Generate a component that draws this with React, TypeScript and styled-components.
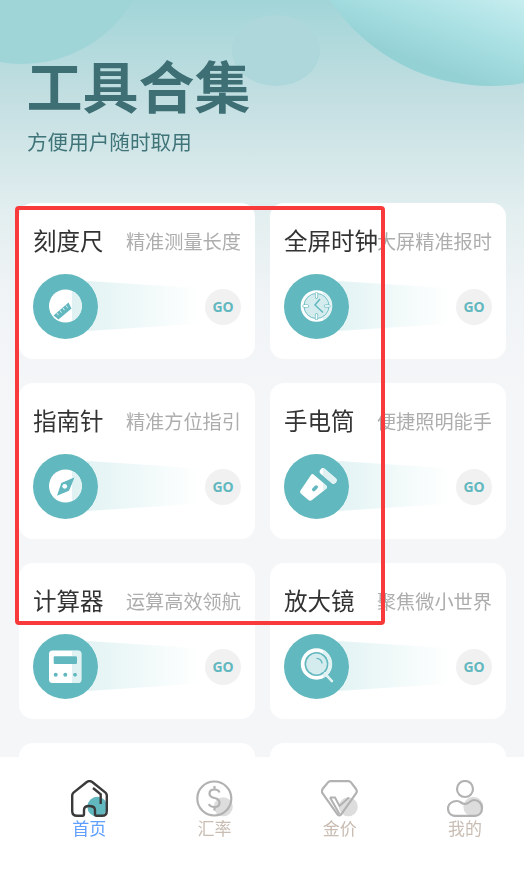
import React from 'react';
import styled, { createGlobalStyle } from 'styled-components';

const TEAL = '#62b8bf';
const CJK = '"Noto Sans CJK SC", "Noto Sans", sans-serif';

const GlobalStyle = createGlobalStyle`
  html, body {
    margin: 0;
    padding: 0;
    background: #fff;
    font-family: ${CJK};
  }
`;

type ToolType = {
  title: string;
  desc: string;
  icon: React.ReactNode;
};

const RulerIcon = () => (
  <svg width="65" height="65" viewBox="0 0 65 65">
    <circle cx="32.5" cy="32" r="16.5" fill="#fff" />
    <path d="M20.5 41.5 L35.5 28.5 L38.5 34.5 L25.5 45.5 Z" fill={TEAL} />
    <path d="M24 39 l1.4 2.2 M27 36.5 l1.4 2.2 M30 34 l1.4 2.2 M33 31.5 l1.4 2.2" stroke="#dff1f2" strokeWidth="1" />
  </svg>
);

const ClockIcon = () => (
  <svg width="65" height="65" viewBox="0 0 65 65">
    <circle cx="32.5" cy="32" r="14.4" fill="#d5ecee" stroke="#fff" strokeWidth="2.8" />
    <circle cx="32.5" cy="32" r="12.5" fill="none" stroke={TEAL} strokeWidth="0.8" />
    <path d="M32.5 19.5 v3.6 M32.5 40.9 v3.6 M20 32 h3.6 M41.4 32 h3.6" stroke={TEAL} strokeWidth="3.2" strokeLinecap="round" />
    <path d="M32.5 19.5 v3.6 M32.5 40.9 v3.6 M20 32 h3.6 M41.4 32 h3.6" stroke="#fff" strokeWidth="1.8" strokeLinecap="round" />
    <path d="M36 25 L31 31 L39 38.5" fill="none" stroke={TEAL} strokeWidth="1.5" />
  </svg>
);

const CompassIcon = () => (
  <svg width="65" height="65" viewBox="0 0 65 65">
    <circle cx="32.5" cy="32" r="16.5" fill="#fff" />
    <path d="M41.7 23.3 L36 36.7 L24 41.7 L28.3 29 Z" fill={TEAL} />
    <circle cx="31.7" cy="32.3" r="2.4" fill="#fff" />
  </svg>
);

const FlashlightIcon = () => (
  <svg width="65" height="65" viewBox="0 0 65 65">
    <path
      d="M16.5 36.5 L27 21 Q28 19.6 29.6 20.4 L42.4 31.6 Q43.6 33 42.6 34.4 L28 46 Q26 47.4 24.4 46 L16.8 39.6 Q15.4 38 16.5 36.5 Z"
      fill="#fff"
    />
    <path d="M39 17.5 L49.5 26.5" stroke="#fff" strokeWidth="6.5" strokeLinecap="round" />
    <rect x="27.5" y="32.5" width="7" height="3.6" rx="1.8" transform="rotate(-45 31 34.3)" fill={TEAL} />
  </svg>
);

const CalculatorIcon = () => (
  <svg width="65" height="65" viewBox="0 0 65 65">
    <rect x="16" y="16.5" width="32.5" height="32.5" rx="3.5" fill="#fff" />
    <rect x="20.7" y="22.3" width="23.3" height="7.8" rx="1" fill={TEAL} />
    <circle cx="22.7" cy="40.7" r="2" fill={TEAL} />
    <circle cx="32.3" cy="40.7" r="2" fill={TEAL} />
    <circle cx="42" cy="40.7" r="2" fill={TEAL} />
  </svg>
);

const MagnifierIcon = () => (
  <svg width="65" height="65" viewBox="0 0 65 65">
    <circle cx="32.5" cy="30" r="14.2" fill="#fff" stroke="#fff" strokeWidth="3" />
    <circle cx="32.5" cy="30" r="12" fill={TEAL} />
    <circle cx="32.5" cy="30" r="10.4" fill="#d5ecee" />
    <path d="M32.5 24.4 a6 6 0 0 1 5.6 5" fill="none" stroke={TEAL} strokeWidth="1.4" />
    <path d="M41 39.5 L47.8 47" stroke="#fff" strokeWidth="2.6" strokeLinecap="round" />
  </svg>
);

const HomeIcon = () => (
  <svg width="37" height="37" viewBox="0 0 37 37">
    <circle cx="26.3" cy="26.7" r="10" fill={TEAL} />
    <path
      d="M15.8 2 L2.5 12.6 Q1.2 13.8 1.2 15.5 V31 Q1.2 35.8 6 35.8 H11.5 Q13 35.8 13 34 V30 Q13 26 18 26 Q24 26 24 30 V34 Q24 35.8 25.6 35.8 H31 Q35.8 35.8 35.8 31 V15.5 Q35.8 13.8 34.5 12.6 L21.2 2 Q18.5 0 15.8 2 Z"
      fill="none"
      stroke="#3a3a3a"
      strokeWidth="2.4"
      strokeLinejoin="round"
    />
    <path d="M22 8 L29.7 14.3 V24" fill="none" stroke="#3a3a3a" strokeWidth="2.4" />
  </svg>
);

const DollarIcon = () => (
  <svg width="37" height="37" viewBox="0 0 37 37">
    <circle cx="27.3" cy="26.7" r="9.5" fill="#ddd" />
    <circle cx="18.3" cy="18.5" r="17" fill="none" stroke="#b2b2b2" strokeWidth="2.2" />
    <path
      d="M23.5 12.5 Q22.5 9.5 18.5 9.5 Q13.5 9.5 13.5 13.5 Q13.5 17 18.5 18 Q23.5 19 23.5 23 Q23.5 27 18.5 27 Q14 27 13 24 M18.5 6 V9.5 M18.5 27 V30.5"
      fill="none"
      stroke="#b2b2b2"
      strokeWidth="2.2"
    />
  </svg>
);

const DiamondIcon = () => (
  <svg width="37" height="37" viewBox="0 0 37 37">
    <circle cx="27.3" cy="26.7" r="9.5" fill="#ddd" />
    <path
      d="M9.5 1.2 H27.5 Q29 1.2 30 2.4 L35 9 Q36.6 11.4 35 13.4 L20 34.6 Q18.3 36.4 16.6 34.6 L1.6 13.4 Q0.2 11.4 1.6 9 L7 2.4 Q8 1.2 9.5 1.2 Z"
      fill="none"
      stroke="#b2b2b2"
      strokeWidth="2.2"
    />
    <path d="M9 17.5 H14 L18.5 26 L28 17.5 M9 17.5 L18.5 34" fill="none" stroke="#b2b2b2" strokeWidth="2" />
  </svg>
);

const UserIcon = () => (
  <svg width="37" height="37" viewBox="0 0 37 37">
    <circle cx="26.3" cy="26.7" r="10" fill="#ddd" />
    <circle cx="18" cy="9" r="8" fill="none" stroke="#b2b2b2" strokeWidth="2.2" />
    <path
      d="M10 21 C14 21 14 24 18 24 C22 24 23 20 27 20 C32 20 35 24 35 28 C35 33 32 35.8 28 35.8 H8 C3 35.8 1 32 1 28 C1 24 5 21 10 21 Z"
      fill="none"
      stroke="#b2b2b2"
      strokeWidth="2.2"
    />
  </svg>
);

const tools: ToolType[] = [
  { title: '刻度尺', desc: '精准测量长度', icon: <RulerIcon /> },
  { title: '全屏时钟', desc: '大屏精准报时', icon: <ClockIcon /> },
  { title: '指南针', desc: '精准方位指引', icon: <CompassIcon /> },
  { title: '手电筒', desc: '便捷照明能手', icon: <FlashlightIcon /> },
  { title: '计算器', desc: '运算高效领航', icon: <CalculatorIcon /> },
  { title: '放大镜', desc: '聚焦微小世界', icon: <MagnifierIcon /> },
  { title: '', desc: '', icon: null },
  { title: '', desc: '', icon: null },
];

const tabs = [
  { label: '首页', icon: <HomeIcon />, active: true },
  { label: '汇率', icon: <DollarIcon />, active: false },
  { label: '金价', icon: <DiamondIcon />, active: false },
  { label: '我的', icon: <UserIcon />, active: false },
];

const App: React.FC = () => {
  return (
    <>
      <GlobalStyle />
      <StyledPage>
        <BlobLeft />
        <BlobSmall />
        <BlobRight />
        <Content>
          <Header>
            <Title>工具合集</Title>
            <Subtitle>方便用户随时取用</Subtitle>
          </Header>
          <ToolGrid>
            {tools.map((tool, index) => (
              <ToolCard key={index}>
                {tool.icon && (
                  <>
                    <CardHead>
                      <CardTitle>{tool.title}</CardTitle>
                      <CardDesc>{tool.desc}</CardDesc>
                    </CardHead>
                    <CardBody>
                      <IconDisc>{tool.icon}</IconDisc>
                      <Ray />
                      <GoButton>GO</GoButton>
                    </CardBody>
                  </>
                )}
              </ToolCard>
            ))}
          </ToolGrid>
        </Content>
        <TabBar>
          {tabs.map((tab) => (
            <Tab key={tab.label}>
              <TabIcon>{tab.icon}</TabIcon>
              <TabLabel $active={tab.active}>{tab.label}</TabLabel>
            </Tab>
          ))}
        </TabBar>
        <Annotation />
      </StyledPage>
    </>
  );
};

const StyledPage = styled.div`
  position: relative;
  display: flex;
  flex-direction: column;
  width: 524px;
  height: 895px;
  overflow: hidden;
  background: linear-gradient(180deg, #a2d5d8 0%, #c4dfe2 100px, #e2eeef 210px, #f1f4f6 300px, #f4f6f8 400px);
`;

const BlobLeft = styled.div`
  position: absolute;
  left: -107px;
  top: -194px;
  width: 258px;
  height: 258px;
  border-radius: 50%;
  background: #9fd5d7;
`;

const BlobSmall = styled.div`
  position: absolute;
  left: 232px;
  top: 15px;
  width: 88px;
  height: 71px;
  border-radius: 50%;
  background: #add7db;
`;

const BlobRight = styled.div`
  position: absolute;
  left: 298px;
  top: -298px;
  width: 384px;
  height: 384px;
  border-radius: 50%;
  background: linear-gradient(200deg, #c6edef 68%, #a9e0e3 78%, #94d1d5 87%);
`;

const Content = styled.div`
  position: relative;
  flex: 1;
  min-height: 0;
  overflow: hidden;
`;

const Header = styled.div`
  height: 203px;
  box-sizing: border-box;
  padding: 44px 0 0 26.5px;
`;

const Title = styled.div`
  font-size: 56px;
  line-height: 80px;
  font-weight: 700;
  color: #3d6f74;
`;

const Subtitle = styled.div`
  margin: 2px 0 0 0.5px;
  font-size: 20.6px;
  line-height: 30px;
  color: #3f7478;
`;

const ToolGrid = styled.div`
  display: grid;
  grid-template-columns: 236px 236px;
  grid-auto-rows: 156px;
  column-gap: 15px;
  row-gap: 24px;
  padding-left: 19px;
`;

const ToolCard = styled.div`
  box-sizing: border-box;
  padding: 22px 14px 0;
  background: #fff;
  border-radius: 14px;
`;

const CardHead = styled.div`
  display: flex;
  align-items: center;
  height: 32px;
`;

const CardTitle = styled.div`
  flex: 1;
  min-width: 0;
  margin-top: -2px;
  font-size: 23.5px;
  line-height: 32px;
  color: #333;
  white-space: nowrap;
`;

const CardDesc = styled.div`
  flex-shrink: 0;
  font-size: 19.2px;
  line-height: 32px;
  color: #adadad;
  white-space: nowrap;
`;

const CardBody = styled.div`
  position: relative;
  display: flex;
  align-items: center;
  justify-content: space-between;
  margin-top: 17px;
  height: 65px;
`;

const IconDisc = styled.div`
  width: 65px;
  height: 65px;
  border-radius: 50%;
  background: ${TEAL};
  line-height: 0;
`;

const Ray = styled.div`
  position: absolute;
  left: 39px;
  top: 6px;
  width: 134px;
  height: 52px;
  clip-path: polygon(0 0, 100% 17%, 100% 83%, 0 100%);
  background: linear-gradient(90deg, #dff1f2 0%, #eef8f8 45%, #ffffff 95%);
  mix-blend-mode: darken;
`;

const GoButton = styled.div`
  position: relative;
  width: 36px;
  height: 36px;
  border-radius: 50%;
  background: #f1f1f1;
  color: ${TEAL};
  font-family: "Noto Sans", sans-serif;
  font-size: 14px;
  font-weight: 700;
  line-height: 35px;
  text-align: center;
`;

const TabBar = styled.div`
  position: relative;
  flex: none;
  display: grid;
  grid-template-columns: repeat(4, 125.3px);
  height: 138px;
  box-sizing: border-box;
  padding: 23px 0 0 26.5px;
  background: #fff;
`;

const Tab = styled.div`
  display: flex;
  flex-direction: column;
  align-items: center;
`;

const TabIcon = styled.div`
  height: 37px;
  line-height: 0;
`;

const TabLabel = styled.div<{ $active: boolean }>`
  margin-top: -1px;
  font-size: 17px;
  line-height: 24px;
  color: ${(p) => (p.$active ? '#5f9fff' : '#c9bdb3')};
`;

const Annotation = styled.div`
  position: absolute;
  left: 15px;
  top: 206px;
  width: 370px;
  height: 419px;
  box-sizing: border-box;
  border: 4px solid #f93a3a;
  border-radius: 4px;
  pointer-events: none;
`;

export default App;
